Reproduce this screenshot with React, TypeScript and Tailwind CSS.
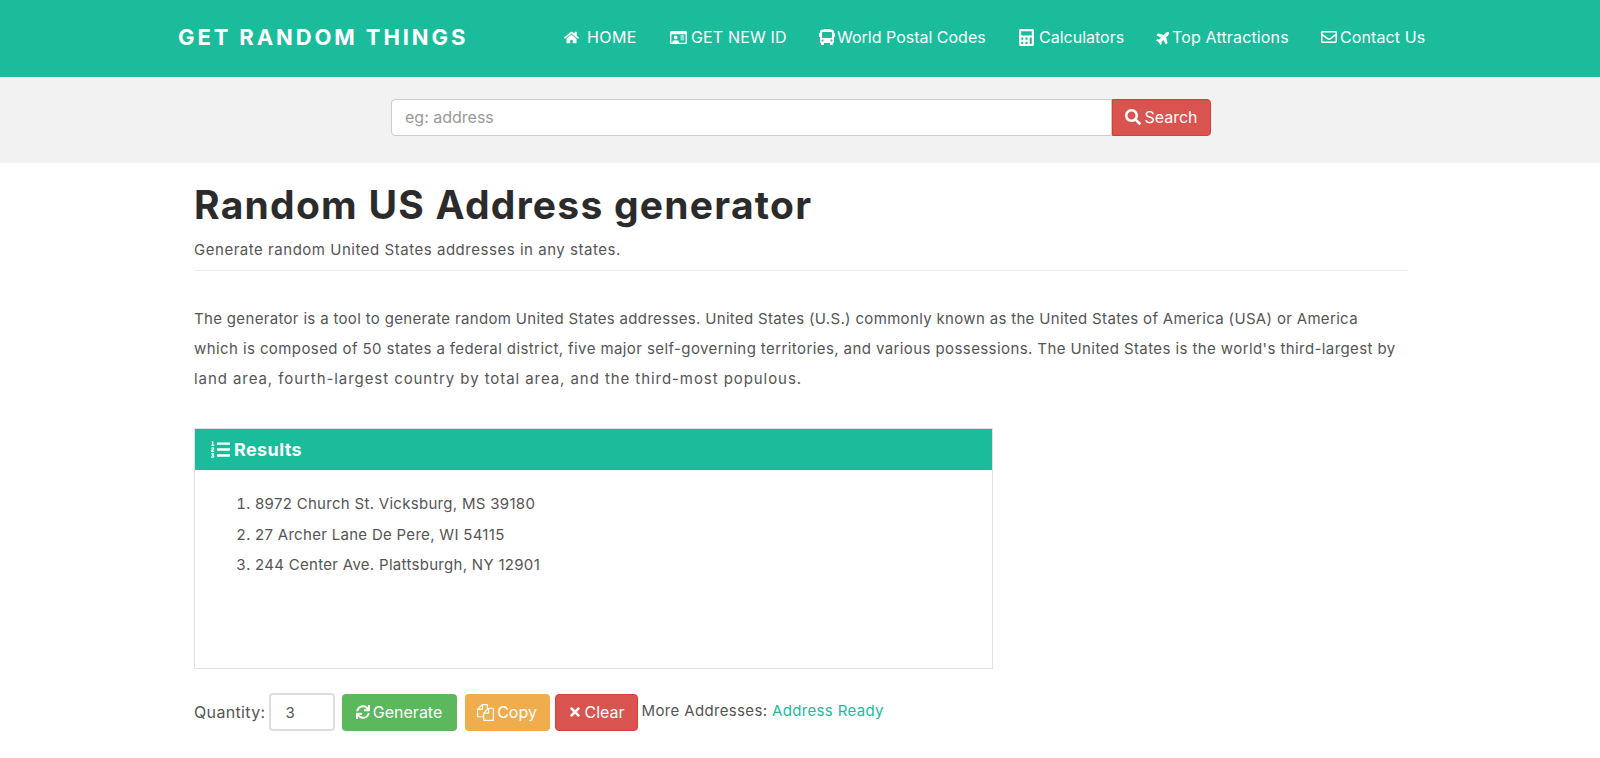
import { FaHome, FaRegIdCard, FaBus, FaCalculator, FaPlane, FaRegEnvelope, FaSearch, FaListOl, FaSync, FaTimes } from "react-icons/fa";

const navItems = [
  { label: "HOME", icon: FaHome, width: "w-[105px]", text: "tracking-[0.4px]", gap: "gap-2", iconClass: "text-[15px]" },
  { label: "GET NEW ID", icon: FaRegIdCard, width: "w-[150px]", text: "tracking-[0.15px]", gap: "gap-[4px]", iconClass: "text-[17px] ml-[1px]" },
  { label: "World Postal Codes", icon: FaBus, width: "w-[199px]", text: "", gap: "gap-[2px]", iconClass: "text-[16px]" },
  { label: "Calculators", icon: FaCalculator, width: "w-[138px]", text: "", gap: "gap-[4px]", iconClass: "text-[17px]" },
  { label: "Top Attractions", icon: FaPlane, width: "w-[165px]", text: "tracking-[0.15px]", gap: "gap-[1px]", iconClass: "text-[15px] -rotate-45" },
  { label: "Contact Us", icon: FaRegEnvelope, width: "w-[105px]", text: "tracking-[0.1px]", gap: "gap-[3px]", iconClass: "text-[16px]" },
];

const addresses = [
  "8972 Church St. Vicksburg, MS 39180",
  "27 Archer Lane De Pere, WI 54115",
  "244 Center Ave. Plattsburgh, NY 12901",
];

function FilesIcon() {
  return (
    <svg viewBox="0 0 1792 1792" className="w-[17px] h-[17px]" fill="currentColor">
      <path d="M1696 384q40 0 68 28t28 68v1216q0 40-28 68t-68 28h-960q-40 0-68-28t-28-68v-288h-544q-40 0-68-28t-28-68v-672q0-40 20-88t48-76l408-408q28-28 76-48t88-20h416q40 0 68 28t28 68v328q68-40 128-40h416zm-544 213l-299 299h299v-299zm-640-384l-299 299h299v-299zm196 647l316-316v-416h-384v416q0 40-28 68t-68 28h-416v640h512v-256q0-40 20-88t48-76zm956 804v-1152h-384v416q0 40-28 68t-68 28h-416v640h896z" />
    </svg>
  );
}

export default function App() {
  return (
    <div className="min-h-[758px] bg-white font-['Inter',sans-serif] text-[15px] text-[#555] overflow-hidden">
      {/* Header */}
      <header className="h-[77px] bg-[#1abc9c] flex items-center pl-[178px] pb-[3px]">
        <div className="w-[386px] text-[22px] font-bold tracking-[2.9px] text-white">GET RANDOM THINGS</div>
        <nav className="flex items-center text-white text-[16px]">
          {navItems.map((item) => (
            <a key={item.label} className={`flex items-center whitespace-nowrap ${item.width} ${item.gap} ${item.text}`}>
              <item.icon className={item.iconClass} />
              {item.label}
            </a>
          ))}
        </nav>
      </header>

      {/* Search */}
      <div className="h-[86px] bg-[#f2f2f2] flex justify-center pt-[22px] pl-[2px]">
        <input
          placeholder="eg: address"
          className="w-[721px] h-[37px] bg-white border border-[#ccc] rounded-l-[4px] px-[13px] pb-[2px] text-[16px] placeholder-[#999] outline-none"
        />
        <button className="w-[99px] h-[37px] flex items-center justify-center gap-[3px] pb-[1px] bg-[#d9534f] border border-[#d43f3a] rounded-r-[4px] text-white text-[16px]">
          <FaSearch className="text-[16px]" />
          Search
        </button>
      </div>

      <main className="ml-[194px] w-[1214px]">
        <h1 className="mt-[18px] text-[39px] leading-[48px] font-bold tracking-[1.25px] text-[#2b2b2b]">Random US Address generator</h1>
        <p className="mt-[11px] leading-[20px] tracking-[0.53px]">Generate random United States addresses in any states.</p>
        <hr className="mt-[10px] border-[#eee]" />

        <div className="mt-[33px] leading-[30px]">
          <p className="tracking-[0.33px]">The generator is a tool to generate random United States addresses. United States (U.S.) commonly known as the United States of America (USA) or America</p>
          <p className="tracking-[0.41px]">which is composed of 50 states a federal district, five major self-governing territories, and various possessions. The United States is the world's third-largest by</p>
          <p className="tracking-[0.93px]">land area, fourth-largest country by total area, and the third-most populous.</p>
        </div>

        {/* Results panel */}
        <section className="mt-[34px] w-[799px] h-[241px] border border-[#e0e0e0]">
          <div className="h-[41px] bg-[#1abc9c] flex items-center gap-[4px] pl-[16px] text-white text-[18px] font-bold tracking-[0.4px]">
            <FaListOl className="text-[19px]" />
            Results
          </div>
          <ol className="list-decimal pl-[60px] pt-[19px] leading-[30.5px] tracking-[0.3px]">
            {addresses.map((a) => (
              <li key={a}>{a}</li>
            ))}
          </ol>
        </section>

        {/* Controls */}
        <div className="mt-[24px] flex items-center">
          <span className="text-[16px] tracking-[0.35px]">Quantity:</span>
          <input
            defaultValue="3"
            className="ml-[3px] w-[66px] h-[38px] border-2 border-[#ddd] rounded-[4px] pl-[15px] text-[15px] outline-none"
          />
          <button className="ml-[7px] w-[115px] h-[37px] flex items-center justify-center gap-[3px] bg-[#5cb85c] rounded-[4px] text-white text-[16px]">
            <FaSync className="text-[14px]" />
            Generate
          </button>
          <button className="ml-[8px] w-[85px] h-[37px] flex items-center justify-center gap-[3px] bg-[#f0ad4e] rounded-[4px] text-white text-[16px]">
            <FilesIcon />
            Copy
          </button>
          <button className="ml-[5px] w-[83px] h-[37px] flex items-center justify-center gap-[3px] bg-[#d9534f] border border-[#d43f3a] rounded-[4px] text-white text-[16px]">
            <FaTimes className="text-[14px]" />
            Clear
          </button>
          <span className="ml-[4px] pb-[2px] tracking-[0.35px]">
            More Addresses: <a className="text-[#1abc9c]">Address Ready</a>
          </span>
        </div>
      </main>
    </div>
  );
}
